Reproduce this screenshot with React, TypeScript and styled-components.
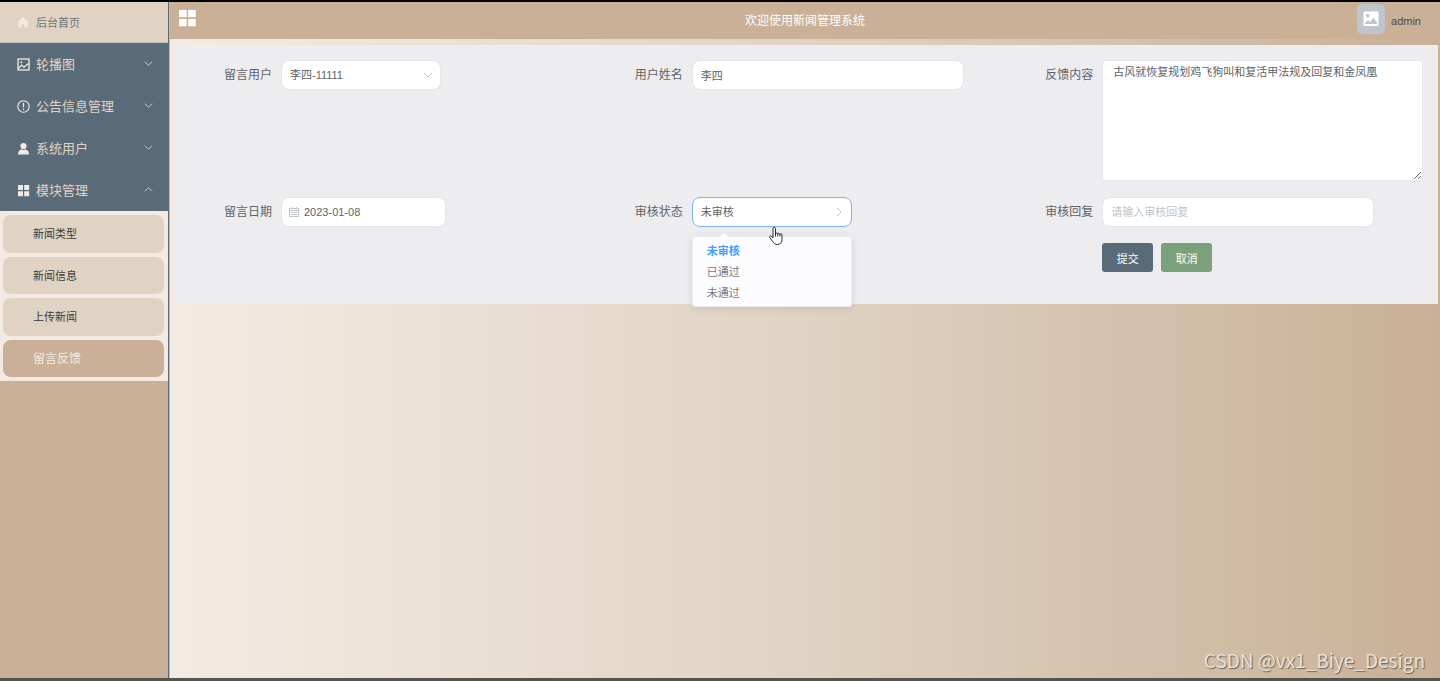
import React from "react";
import styled, { createGlobalStyle, css } from "styled-components";

const slate = "#596b79";
const tan = "#c9b096";
const sand = "#e0d3c3";
const cream = "#f3ebe3";

const GlobalStyle = createGlobalStyle`
  *, *::before, *::after { box-sizing: border-box; }
  body {
    margin: 0;
    font-family: "Liberation Sans", "Noto Sans CJK SC", sans-serif;
    font-size: 11px;
    color: #606266;
  }
  button, input, select, textarea { font: inherit; color: inherit; }
`;

const Page = styled.div`
  position: relative;
  display: flex;
  min-height: 100vh;
  border-top: 2px solid #000;
  border-bottom: 3px solid #54534e;
`;

const Sidebar = styled.nav`
  flex: none;
  width: 169px;
  border-right: 1px solid ${slate};
  background: ${tan};
`;

const HomeLink = styled.a`
  display: flex;
  align-items: center;
  gap: 7px;
  height: 41px;
  padding-left: 17px;
  border-bottom: 1px solid #b9c0bd;
  background: ${sand};
  color: #6f7476;
  text-decoration: none;
  svg { color: ${cream}; }
`;

const MenuButton = styled.button`
  display: flex;
  align-items: center;
  gap: 6px;
  width: 100%;
  height: 42px;
  padding: 0 15px 0 17px;
  border: 0;
  background: ${slate};
  color: ${sand};
  font-size: 13px;
  text-align: left;
  > svg:first-child { color: ${cream}; }
`;

const MenuLabel = styled.span`
  display: flex;
  flex: 1;
  align-items: center;
  justify-content: space-between;
  padding-bottom: 2px;
`;

const Submenu = styled.div`
  display: grid;
  grid-auto-rows: 1fr;
  gap: 4px;
  min-height: 170px;
  padding: 4px 4px 4px 3px;
  background: ${cream};
`;

const SubLink = styled.a<{ $active?: boolean }>`
  display: flex;
  align-items: center;
  padding: 0 0 1px 30px;
  border-radius: 8px;
  background: ${(p) => (p.$active ? tan : sand)};
  color: ${(p) => (p.$active ? cream : "#3c3c3c")};
  font-size: ${(p) => (p.$active ? "12px" : "11px")};
  text-decoration: none;
`;

const Main = styled.div`
  flex: 1;
  min-width: 0;
  border-left: 1px solid #c2bdb5;
  background: linear-gradient(90deg, ${cream} 0%, ${sand} 50%, ${tan} 100%);
`;

const Header = styled.header`
  display: grid;
  grid-template-columns: 1fr auto 1fr;
  align-items: center;
  height: 37px;
  padding: 0 9px;
  background: ${tan};
`;

const CollapseButton = styled.button`
  display: flex;
  justify-self: start;
  margin-bottom: 4px;
  padding: 0;
  border: 0;
  background: none;
  color: #fff;
`;

const Title = styled.h1`
  margin: 0;
  padding-bottom: 2px;
  color: #fff;
  font-size: 12px;
  font-weight: 400;
`;

const Account = styled.div`
  display: flex;
  align-items: center;
  justify-self: end;
  gap: 6px;
  padding-right: 10px;
  color: #4c4c4c;
`;

const Avatar = styled.span`
  display: flex;
  align-items: center;
  justify-content: center;
  width: 28px;
  height: 30px;
  margin-bottom: 4px;
  border-radius: 5px;
  background: #c0c4cc;
`;

const Panel = styled.form`
  display: grid;
  grid-template-columns: repeat(3, minmax(0, 1fr));
  row-gap: 16px;
  margin: 6px 2px 0 6px;
  padding: 15px 15px 32px;
  background: #ededef;
`;

const Field = styled.div`
  display: flex;
  align-items: flex-start;
`;

const Label = styled.label`
  flex: none;
  width: 90px;
  padding-right: 9px;
  font-size: 12px;
  line-height: 30px;
  text-align: right;
`;

const Control = styled.div<{ $width: string }>`
  position: relative;
  width: ${(p) => p.$width};
`;

const controlBox = css`
  display: block;
  width: 100%;
  border: 1px solid #e4e6ec;
  background: #fff;
  outline: none;
  &::placeholder { color: #c0c4cc; opacity: 1; }
`;

const TextInput = styled.input<{ $icon?: boolean }>`
  ${controlBox}
  height: 30px;
  padding: 0 9px 0 ${(p) => (p.$icon ? "22px" : "8px")};
  border-radius: 8px;
`;

const Select = styled.select<{ $open?: boolean }>`
  ${controlBox}
  height: 30px;
  padding: 0 24px 0 8px;
  border-radius: 8px;
  border-color: ${(p) => (p.$open ? "#7fb2ea" : "#e4e6ec")};
  appearance: none;
`;

const TextArea = styled.textarea`
  ${controlBox}
  height: 121px;
  padding: 3px 10px;
  border-radius: 3px;
  line-height: 16px;
  resize: vertical;
`;

const ControlIcon = styled.span<{ $side: "left" | "right" }>`
  position: absolute;
  top: 0;
  bottom: 0;
  ${(p) => p.$side}: 8px;
  display: flex;
  align-items: center;
  color: #c0c4cc;
  pointer-events: none;
`;

const Dropdown = styled.ul`
  position: absolute;
  z-index: 2;
  top: 39px;
  left: 0;
  width: 100%;
  margin: 0;
  padding: 4px 0 2px;
  border: 1px solid #e9ebf0;
  border-radius: 3px;
  background: #fcfcfe;
  box-shadow: 0 2px 8px rgba(0, 0, 0, 0.1);
  list-style: none;
  &::before {
    content: "";
    position: absolute;
    top: -4px;
    left: 26px;
    border: 5px solid transparent;
    border-top: 0;
    border-bottom: 4px solid #fcfcfe;
  }
`;

const Option = styled.li<{ $selected?: boolean }>`
  padding-left: 14px;
  line-height: 21px;
  color: ${(p) => (p.$selected ? "#409eff" : "#77797d")};
  font-weight: ${(p) => (p.$selected ? 700 : 400)};
`;

const Pointer = styled.svg`
  position: absolute;
  z-index: 3;
  top: 29px;
  left: 76px;
`;

const Actions = styled.div`
  grid-column: 3;
  display: flex;
  gap: 8px;
  padding-left: 90px;
`;

const ActionButton = styled.button<{ $color: string }>`
  width: 51px;
  height: 29px;
  padding: 0;
  border: 0;
  border-radius: 3px;
  background: ${(p) => p.$color};
  color: #fff;
`;

const Watermark = styled.div`
  position: absolute;
  right: 15px;
  bottom: 6px;
  color: #e8e2dc;
  font-family: "Noto Sans CJK SC", sans-serif;
  font-size: 19px;
  line-height: 24px;
  text-shadow: 1px 1px 1px #6b625a;
`;

const Chevron = ({ dir = "down", size = 10 }: { dir?: "down" | "up" | "right"; size?: number }) => {
  const paths = { down: "M1 3l4 4 4-4", up: "M1 7l4-4 4 4", right: "M3 1l4 4-4 4" };
  return (
    <svg width={size} height={size} viewBox="0 0 10 10" fill="none" stroke="currentColor" aria-hidden="true">
      <path d={paths[dir]} />
    </svg>
  );
};

const HomeIcon = () => (
  <svg width="12" height="12" viewBox="0 0 12 12" fill="currentColor" aria-hidden="true">
    <path d="M6 .8 0.300 6.200l.7.800h.5v4.500h3V8.300h3v3.200h3V7h.5l.7-.8z" />
  </svg>
);

const PictureIcon = () => (
  <svg width="13" height="13" viewBox="0 0 13 13" fill="none" stroke="currentColor" aria-hidden="true">
    <rect x="1" y="1" width="11" height="11" strokeWidth="1.300" />
    <path d="M1.500 10.500 4.500 7 7 9.200 11.500 5.500" strokeWidth="1.200" />
    <circle cx="4.300" cy="4.200" r="1" fill="currentColor" stroke="none" />
  </svg>
);

const WarningIcon = () => (
  <svg width="13" height="13" viewBox="0 0 13 13" fill="none" stroke="currentColor" aria-hidden="true">
    <circle cx="6.500" cy="6.500" r="5.700" strokeWidth="1.100" />
    <path d="M6.500 3v4.500M6.500 8.700V10" strokeWidth="1.200" />
  </svg>
);

const UserIcon = () => (
  <svg width="13" height="13" viewBox="0 0 13 13" fill="currentColor" aria-hidden="true">
    <circle cx="6.500" cy="4" r="3.100" />
    <path d="M1 12.500c0-2.800 1.500-4.600 3.500-5.200.6.500 1.200.7 2 .7s1.400-.2 2-.7c2 .6 3.500 2.400 3.500 5.200z" />
  </svg>
);

const GridIcon = () => (
  <svg width="17" height="17" viewBox="0 0 17 17" fill="currentColor" aria-hidden="true">
    <path d="M0 0h7.700v7.300H0zM9.200 0h7.600v7.300H9.200zM0 9h7.700v7.300H0zM9.200 9h7.600v7.300H9.200z" />
  </svg>
);

const MenuGridIcon = () => (
  <svg width="13" height="13" viewBox="0 0 13 13" fill="currentColor" aria-hidden="true">
    <path d="M1 1h5v5H1zM7.200 1h5v5h-5zM1 7.200h5v5H1zM7.200 7.200h5v5h-5z" />
  </svg>
);

const AvatarIcon = () => (
  <svg width="16" height="16" viewBox="0 0 16 16" aria-hidden="true">
    <rect x="0.500" y="0.500" width="15" height="14.500" rx="1" fill="#fff" />
    <circle cx="4.700" cy="4.700" r="1.900" fill="#c0c4cc" />
    <path d="M2 13v-1l3-3 2 2 3.500-4.500L14 11.500V13z" fill="#c0c4cc" />
  </svg>
);

const CalendarIcon = () => (
  <svg width="10" height="10" viewBox="0 0 10 10" fill="none" stroke="currentColor" aria-hidden="true">
    <path d="M.5 1.500h9v8h-9zM.5 3.500h9M2.500 0v2M7.500 0v2M2 5.500h6M2 7.500h6" />
  </svg>
);

const menu = [
  { label: "轮播图", icon: <PictureIcon /> },
  { label: "公告信息管理", icon: <WarningIcon /> },
  { label: "系统用户", icon: <UserIcon /> },
  { label: "模块管理", icon: <MenuGridIcon />, open: true },
];

const submenu = ["新闻类型", "新闻信息", "上传新闻", "留言反馈"];
const statuses = ["未审核", "已通过", "未通过"];

export default function App() {
  return (
    <>
      <GlobalStyle />
      <Page>
        <Sidebar>
          <HomeLink href="#home">
            <HomeIcon />
            后台首页
          </HomeLink>
          {menu.map((item) => (
            <MenuButton key={item.label} type="button" aria-expanded={!!item.open}>
              {item.icon}
              <MenuLabel>
                {item.label}
                <Chevron dir={item.open ? "up" : "down"} size={9} />
              </MenuLabel>
            </MenuButton>
          ))}
          <Submenu>
            {submenu.map((label) => (
              <SubLink key={label} href={`#${label}`} $active={label === "留言反馈"}>
                {label}
              </SubLink>
            ))}
          </Submenu>
        </Sidebar>
        <Main>
          <Header>
            <CollapseButton type="button" aria-label="折叠菜单">
              <GridIcon />
            </CollapseButton>
            <Title>欢迎使用新闻管理系统</Title>
            <Account>
              <Avatar>
                <AvatarIcon />
              </Avatar>
              admin
            </Account>
          </Header>
          <Panel onSubmit={(e) => e.preventDefault()}>
            <Field>
              <Label htmlFor="user">留言用户</Label>
              <Control $width="160px">
                <Select id="user" defaultValue="李四-11111">
                  <option>李四-11111</option>
                </Select>
                <ControlIcon $side="right">
                  <Chevron />
                </ControlIcon>
              </Control>
            </Field>
            <Field>
              <Label htmlFor="name">用户姓名</Label>
              <Control $width="272px">
                <TextInput id="name" defaultValue="李四" />
              </Control>
            </Field>
            <Field>
              <Label htmlFor="content">反馈内容</Label>
              <Control $width="100%">
                <TextArea id="content" defaultValue="古风就恢复规划鸡飞狗叫和复活甲法规及回复和金凤凰" />
              </Control>
            </Field>
            <Field>
              <Label htmlFor="date">留言日期</Label>
              <Control $width="165px">
                <TextInput id="date" $icon defaultValue="2023-01-08" />
                <ControlIcon $side="left">
                  <CalendarIcon />
                </ControlIcon>
              </Control>
            </Field>
            <Field>
              <Label htmlFor="status">审核状态</Label>
              <Control $width="160px">
                <Select id="status" $open defaultValue="未审核">
                  {statuses.map((s) => (
                    <option key={s}>{s}</option>
                  ))}
                </Select>
                <ControlIcon $side="right">
                  <Chevron dir="right" />
                </ControlIcon>
                <Dropdown role="listbox" aria-label="审核状态">
                  {statuses.map((s, i) => (
                    <Option key={s} role="option" aria-selected={i === 0} $selected={i === 0}>
                      {s}
                    </Option>
                  ))}
                </Dropdown>
                <Pointer width="16" height="20" viewBox="0 0 16 20" fill="#fff" stroke="#2b2735" strokeLinejoin="round" aria-hidden="true">
                  <path d="M5 12V2.500C5 1 7.500 1 7.500 2.500V8c0-1.400 2.300-1.300 2.300.2 0-1.300 2.200-1.200 2.200.3 0-1.100 2-1 2 .5v4.500c0 3-1.700 5-4.500 5-2.300 0-3.600-1-4.700-3L1.700 11.500C1 10.200 2.600 9.400 3.500 10.500z" />
                  <path d="M7.500 8v2.500M9.800 8.200v2.300M12 8.500v2" fill="none" />
                </Pointer>
              </Control>
            </Field>
            <Field>
              <Label htmlFor="reply">审核回复</Label>
              <Control $width="272px">
                <TextInput id="reply" placeholder="请输入审核回复" />
              </Control>
            </Field>
            <Actions>
              <ActionButton type="submit" $color={slate}>
                提交
              </ActionButton>
              <ActionButton type="button" $color="#7ba17c">
                取消
              </ActionButton>
            </Actions>
          </Panel>
        </Main>
        <Watermark>CSDN @vx1_Biye_Design</Watermark>
      </Page>
    </>
  );
}
